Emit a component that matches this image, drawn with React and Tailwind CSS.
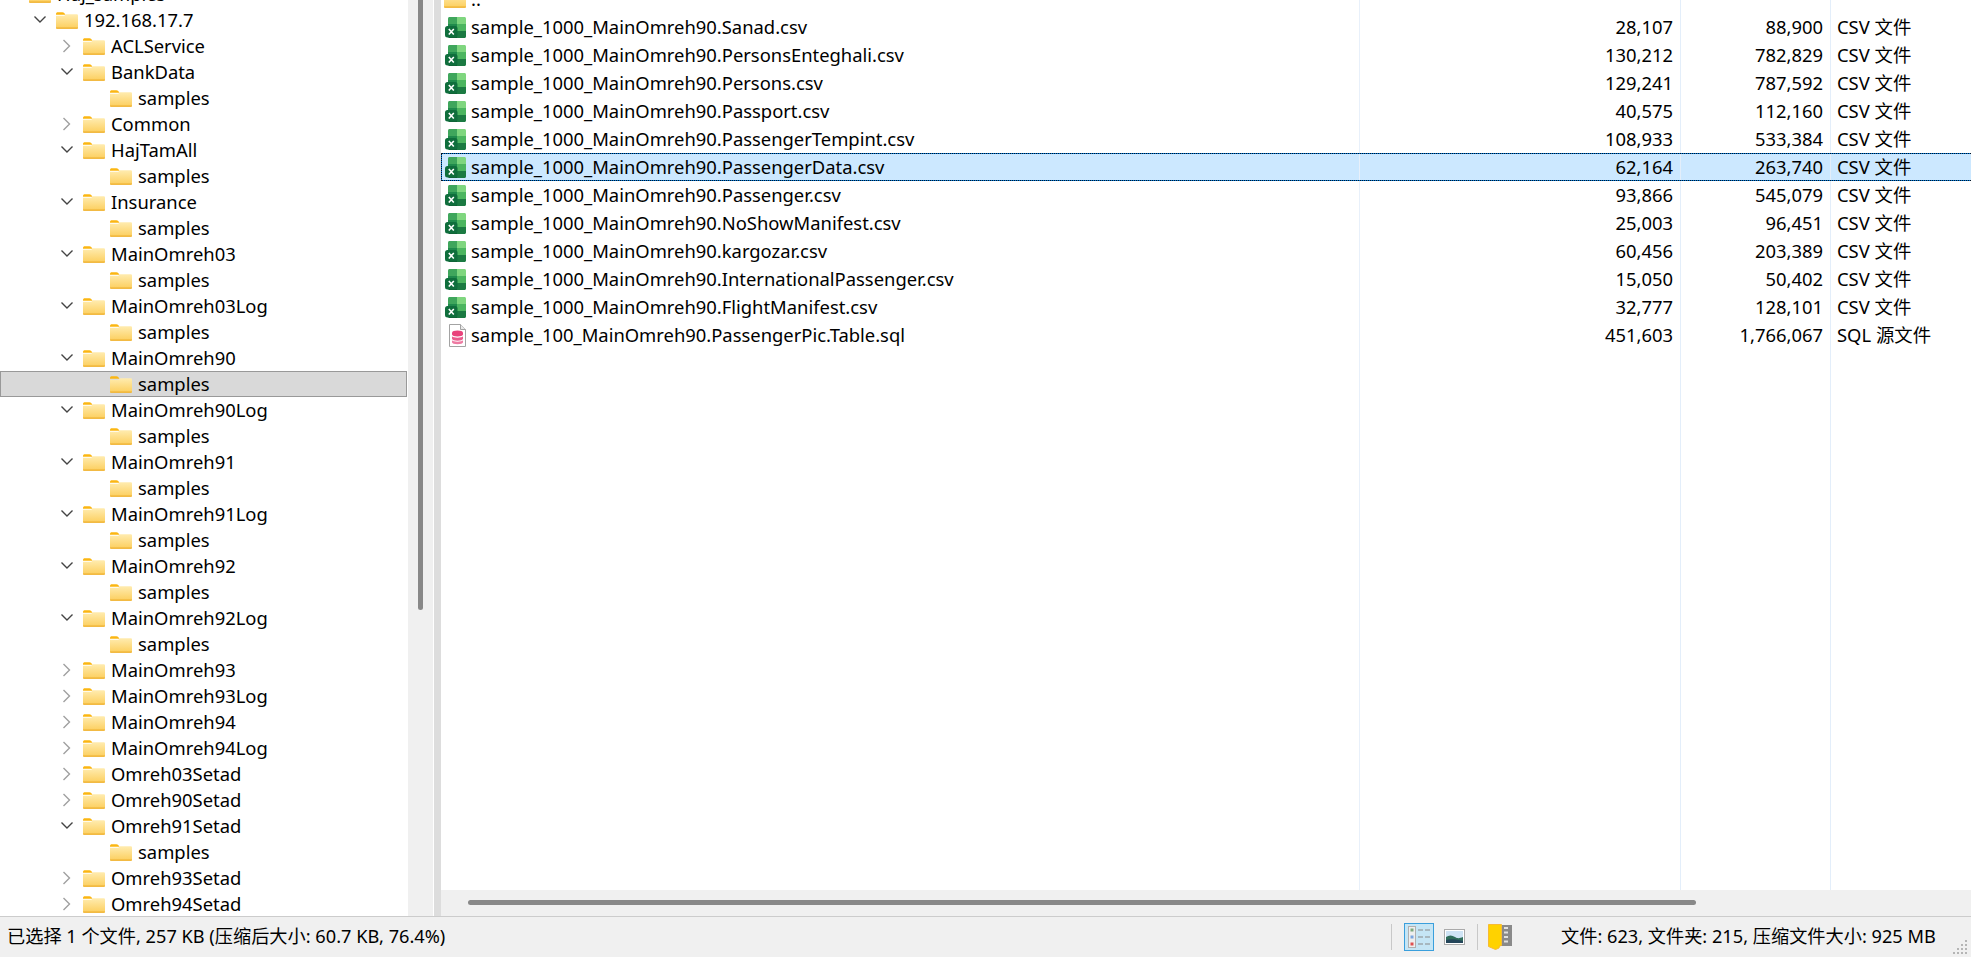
const FONT = 'font-["Noto_Sans","Noto_Sans_CJK_SC",sans-serif]';

// [label, level, expanded]  expanded: true | false | null (no chevron)
const tree = [
  ['Haj_samples', 0, true],
  ['192.168.17.7', 1, true],
  ['ACLService', 2, false],
  ['BankData', 2, true],
  ['samples', 3, null],
  ['Common', 2, false],
  ['HajTamAll', 2, true],
  ['samples', 3, null],
  ['Insurance', 2, true],
  ['samples', 3, null],
  ['MainOmreh03', 2, true],
  ['samples', 3, null],
  ['MainOmreh03Log', 2, true],
  ['samples', 3, null],
  ['MainOmreh90', 2, true],
  ['samples', 3, null, true],
  ['MainOmreh90Log', 2, true],
  ['samples', 3, null],
  ['MainOmreh91', 2, true],
  ['samples', 3, null],
  ['MainOmreh91Log', 2, true],
  ['samples', 3, null],
  ['MainOmreh92', 2, true],
  ['samples', 3, null],
  ['MainOmreh92Log', 2, true],
  ['samples', 3, null],
  ['MainOmreh93', 2, false],
  ['MainOmreh93Log', 2, false],
  ['MainOmreh94', 2, false],
  ['MainOmreh94Log', 2, false],
  ['Omreh03Setad', 2, false],
  ['Omreh90Setad', 2, false],
  ['Omreh91Setad', 2, true],
  ['samples', 3, null],
  ['Omreh93Setad', 2, false],
  ['Omreh94Setad', 2, false],
];

const files = [
  ['sample_1000_MainOmreh90.Sanad.csv', '28,107', '88,900', 'CSV 文件'],
  ['sample_1000_MainOmreh90.PersonsEnteghali.csv', '130,212', '782,829', 'CSV 文件'],
  ['sample_1000_MainOmreh90.Persons.csv', '129,241', '787,592', 'CSV 文件'],
  ['sample_1000_MainOmreh90.Passport.csv', '40,575', '112,160', 'CSV 文件'],
  ['sample_1000_MainOmreh90.PassengerTempint.csv', '108,933', '533,384', 'CSV 文件'],
  ['sample_1000_MainOmreh90.PassengerData.csv', '62,164', '263,740', 'CSV 文件', true],
  ['sample_1000_MainOmreh90.Passenger.csv', '93,866', '545,079', 'CSV 文件'],
  ['sample_1000_MainOmreh90.NoShowManifest.csv', '25,003', '96,451', 'CSV 文件'],
  ['sample_1000_MainOmreh90.kargozar.csv', '60,456', '203,389', 'CSV 文件'],
  ['sample_1000_MainOmreh90.InternationalPassenger.csv', '15,050', '50,402', 'CSV 文件'],
  ['sample_1000_MainOmreh90.FlightManifest.csv', '32,777', '128,101', 'CSV 文件'],
];

const FolderIcon = () => (
  <svg width="22" height="17" viewBox="0 0 22 19" preserveAspectRatio="none" className="shrink-0">
    <path d="M0 2.200C0 1 .8.3 1.800.3h4.600c.8 0 1.300.3 1.800.9L9.600 3H0z" fill="#fbb612" />
    <path d="M0 4.200h8.200L10 2.400h10.600c.8 0 1.400.6 1.400 1.400v13.600c0 .9-.6 1.400-1.400 1.400H1.400C.6 18.800 0 18.300 0 17.400z" fill="url(#folderBody)" />
    <path d="M0 17.200h22v.3c0 .8-.6 1.300-1.400 1.300H1.400C.6 18.800 0 18.300 0 17.500z" fill="#eeb02f" />
  </svg>
);

const ExcelIcon = () => (
  <svg width="21" height="21" viewBox="0 0 21 21" className="shrink-0">
    <path d="M3 1.500C3 .7 3.700 0 4.500 0H12v7H3z" fill="#3fa65c" />
    <path d="M12 0h7.500c.8 0 1.500.7 1.500 1.500V7h-9z" fill="#7fd67f" />
    <rect x="3" y="7" width="9" height="7" fill="#1f8a4c" />
    <rect x="12" y="7" width="9" height="7" fill="#4cb560" />
    <path d="M3 14h9v7H4.500C3.700 21 3 20.300 3 19.500z" fill="#125c33" />
    <path d="M12 14h9v5.500c0 .8-.7 1.500-1.500 1.500H12z" fill="#1b7a42" />
    <rect x="0" y="9" width="12.500" height="11.500" rx="2.500" fill="#0f6e3c" />
    <path d="M3.800 12l5 5.500M8.800 12l-5 5.500" stroke="#fff" strokeWidth="1.600" />
  </svg>
);

const SqlIcon = () => (
  <svg width="17" height="23" viewBox="0 0 17 23" className="shrink-0">
    <path d="M.5.500h11l5 5v17H.5z" fill="#fff" stroke="#a3a3a3" />
    <path d="M11.500.500v5h5" fill="#e8e8e8" stroke="#a3a3a3" />
    <path d="M3 8.500c0-1.300 2.500-2 5.500-2s5.500.7 5.500 2v2c0 1.300-2.500 2-5.500 2S3 11.800 3 10.500z" fill="#e9437c" />
    <path d="M3 12.300c1 1 3 1.400 5.500 1.400s4.500-.4 5.500-1.400v2.400c0 1.300-2.500 2-5.500 2s-5.500-.7-5.500-2z" fill="#ea5b8d" />
    <path d="M3 16.300c1 1 3 1.400 5.500 1.400s4.500-.4 5.500-1.400v1.900c0 1.300-2.500 2-5.500 2s-5.500-.7-5.500-2z" fill="#ee7aa2" />
  </svg>
);

const Chevron = ({ open }) =>
  open ? (
    <svg width="14" height="14" viewBox="0 0 14 14">
      <path d="M1.500 3.500l5.500 5.500 5.500-5.500" fill="none" stroke="#444" strokeWidth="1.400" />
    </svg>
  ) : (
    <svg width="14" height="14" viewBox="0 0 14 14">
      <path d="M3.500 1l6 6-6 6" fill="none" stroke="#a0a0a0" strokeWidth="1.400" />
    </svg>
  );

const TreeRow = ({ label, level, open, selected }) => (
  <div
    className={`mr-px flex h-[26px] items-center border ${selected ? 'bg-[#d9d9d9] border-[#999999]' : 'border-transparent'}`}
    style={{ paddingLeft: level * 27 }}
  >
    <span className="flex w-[28px] shrink-0 items-center justify-center pr-[5px]">
      {open !== null && <Chevron open={open} />}
    </span>
    <FolderIcon />
    <span className="ml-[6px] whitespace-nowrap">{label}</span>
  </div>
);

const FileRow = ({ icon, name, size, packed, type, selected }) => {
  const cellBg = selected ? 'bg-[#cce8ff]' : '';
  return (
    <div
      className={`flex h-[28px] w-[1600px] shrink-0 items-stretch ${
        selected ? 'border border-dotted border-[#00162b] bg-[#0078d7]' : ''
      }`}
    >
      <div className={`flex shrink-0 items-center border-r border-[#e8f0fa] ${selected ? 'w-[918px] pl-[3px]' : 'w-[919px] pl-[4px]'} ${cellBg}`}>
        <span className="flex w-[21px] shrink-0 items-center justify-end">{icon}</span>
        <span className="ml-[5px] whitespace-nowrap">{name}</span>
      </div>
      <div className={`flex w-[321px] shrink-0 items-center justify-end border-r border-[#e3eefa] pr-[7px] ${cellBg}`}>{size}</div>
      <div className={`flex w-[150px] shrink-0 items-center justify-end border-r border-[#e3eefa] pr-[7px] ${cellBg}`}>{packed}</div>
      <div className={`flex min-w-0 flex-1 items-center whitespace-nowrap pl-[6px] ${cellBg}`}>{type}</div>
    </div>
  );
};

export default function App() {
  return (
    <div className={`flex h-screen flex-col overflow-hidden bg-white text-[18.4px] text-black ${FONT}`}>
      <svg width="0" height="0" className="block">
        <defs>
          <linearGradient id="folderBody" x1="0" y1="0" x2="0" y2="1">
            <stop offset="0" stopColor="#ffecb0" />
            <stop offset="1" stopColor="#fcce5c" />
          </linearGradient>
        </defs>
      </svg>

      <div className="flex min-h-0 flex-1">
        {/* folder tree */}
        <div className="w-[408px] shrink-0 overflow-hidden">
          <div className="mt-[-19px]">
            {tree.map(([label, level, open, selected], i) => (
              <TreeRow key={i} label={label} level={level} open={open} selected={selected} />
            ))}
          </div>
        </div>
        <div className="w-[25px] shrink-0 bg-[#f0f0f0] pl-[10px]">
          <div className="h-[610px] w-[5px] rounded-b-full bg-[#888888]" />
        </div>
        <div className="ml-px w-[7px] shrink-0 bg-[#dddddd]" />

        {/* file list */}
        <div className="flex min-w-0 flex-1 flex-col">
          <div className="flex min-h-0 flex-1 flex-col overflow-hidden">
            <div className="mt-[-15px] flex min-h-0 flex-1 flex-col">
              <FileRow icon={<FolderIcon />} name=".." size="" packed="" type="" />
              {files.map(([name, size, packed, type, selected]) => (
                <FileRow key={name} icon={<ExcelIcon />} name={name} size={size} packed={packed} type={type} selected={selected} />
              ))}
              <FileRow icon={<SqlIcon />} name="sample_100_MainOmreh90.PassengerPic.Table.sql" size="451,603" packed="1,766,067" type="SQL 源文件" />
              <div className="flex min-h-0 flex-1">
                <div className="w-[919px] shrink-0 border-r border-[#e8f0fa]" />
                <div className="w-[321px] shrink-0 border-r border-[#e3eefa]" />
                <div className="w-[150px] shrink-0 border-r border-[#e3eefa]" />
              </div>
            </div>
          </div>
          <div className="h-[26px] shrink-0 bg-[#f0f0f0] pl-[27px] pt-[10px]">
            <div className="h-[5px] w-[1228px] rounded-full bg-[#888888]" />
          </div>
        </div>
      </div>

      {/* status bar */}
      <div className="flex h-[41px] shrink-0 items-center border-t border-[#cccccc] bg-[#f0f0f0] pl-[7px] text-[18.2px]">
        <span className="w-[1384px] shrink-0 whitespace-nowrap">已选择 1 个文件, 257 KB (压缩后大小: 60.7 KB, 76.4%)</span>
        <div className="h-[26px] w-px shrink-0 bg-[#c8c8c8]" />
        <div className="ml-[12px] flex h-[28px] w-[30px] shrink-0 items-center justify-center border border-[#3a9fdc] bg-[#c5e5f5]">
          <svg width="24" height="24" viewBox="0 0 24 24">
            <rect x="1.500" y="1.500" width="7" height="21" fill="#eee" stroke="#b0b0b0" />
            <rect x="3.500" y="3.500" width="3" height="3" fill="#7fa97f" />
            <rect x="3.500" y="10.500" width="3" height="3" fill="#7aa5e0" />
            <rect x="3.500" y="17.500" width="3" height="3" fill="#e05050" />
            <path d="M11 5h5M18 5h5M11 12h5M18 12h5M11 19h5M18 19h5" stroke="#8a8a8a" strokeWidth="1.200" />
          </svg>
        </div>
        <svg width="21" height="16" viewBox="0 0 21 16" className="ml-[10px] shrink-0">
          <rect x=".5" y=".5" width="20" height="15" fill="#fff" stroke="#aaaaaa" />
          <rect x="2" y="2" width="17" height="12" fill="#cfe4f5" />
          <path d="M2 8c3-2 6-2 9 0s5 1 8 0v6H2z" fill="#2f6d5a" />
          <path d="M2 11c4-1 10-1 17 1v2H2z" fill="#24455a" />
        </svg>
        <div className="ml-[12px] h-[26px] w-px shrink-0 bg-[#c8c8c8]" />
        <svg width="24" height="26" viewBox="0 0 24 26" className="ml-[10px] shrink-0">
          <rect x="11" y="1" width="13" height="21" fill="#8a8a8a" />
          <path d="M16 3h4v2h-4zM16 7.500h4v2h-4zM16 12h4v2h-4zM16 16.500h4v2h-4z" fill="#e0e0e0" />
          <path d="M.5.500h13v21l-2 .5-.5 2-3.500 1.500-7-3z" fill="#ffd200" stroke="#f7bb33" />
        </svg>
        <span className="ml-[49px] w-[375px] shrink-0 whitespace-nowrap">文件: 623, 文件夹: 215, 压缩文件大小: 925 MB</span>
        <svg width="16" height="16" viewBox="0 0 16 16" className="ml-auto mr-[2px] mt-[20px] shrink-0">
          <g fill="#b5b5b5">
            <rect x="12" y="1" width="2" height="2" />
            <rect x="8" y="5" width="2" height="2" />
            <rect x="12" y="5" width="2" height="2" />
            <rect x="4" y="9" width="2" height="2" />
            <rect x="8" y="9" width="2" height="2" />
            <rect x="12" y="9" width="2" height="2" />
            <rect x="0" y="13" width="2" height="2" />
            <rect x="4" y="13" width="2" height="2" />
            <rect x="8" y="13" width="2" height="2" />
            <rect x="12" y="13" width="2" height="2" />
          </g>
        </svg>
      </div>
    </div>
  );
}
